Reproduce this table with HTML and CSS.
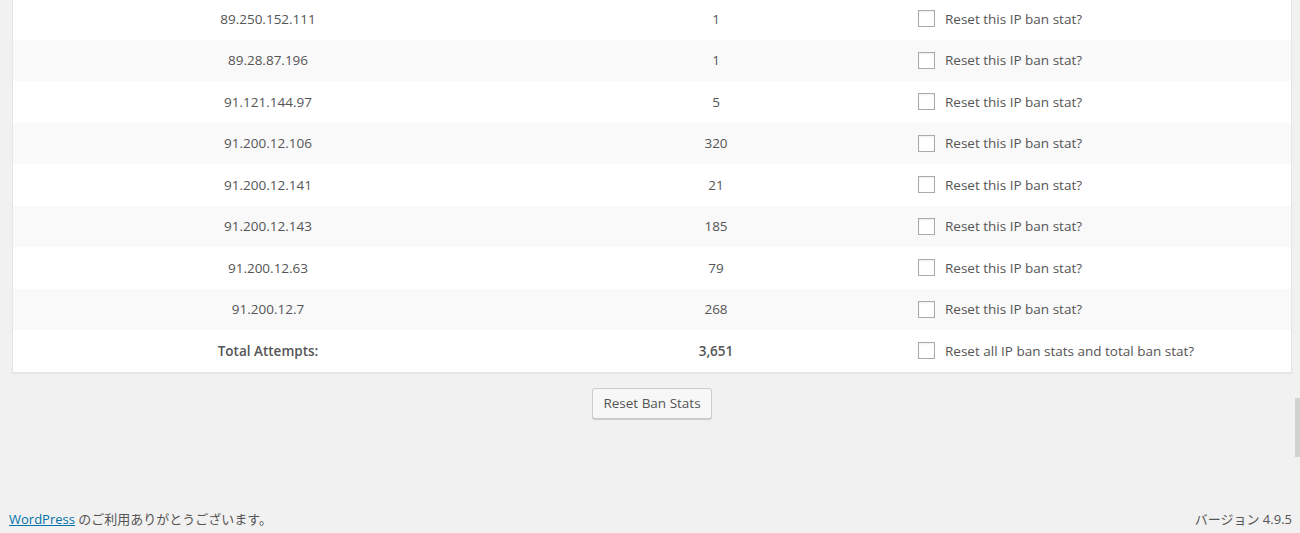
FILE: index.html
```html
<!DOCTYPE html>
<html lang="ja">
<head>
<meta charset="utf-8">
<title>Ban Stats</title>
<link rel="stylesheet" href="styles.css">
</head>
<body>
<div class="wrap">
  <div class="card">
    <div class="row"><div class="c ip">89.250.152.111</div><div class="c num">1</div><label class="c chk"><span class="box"></span>Reset this IP ban stat?</label></div>
    <div class="row alt"><div class="c ip">89.28.87.196</div><div class="c num">1</div><label class="c chk"><span class="box"></span>Reset this IP ban stat?</label></div>
    <div class="row"><div class="c ip">91.121.144.97</div><div class="c num">5</div><label class="c chk"><span class="box"></span>Reset this IP ban stat?</label></div>
    <div class="row alt"><div class="c ip">91.200.12.106</div><div class="c num">320</div><label class="c chk"><span class="box"></span>Reset this IP ban stat?</label></div>
    <div class="row"><div class="c ip">91.200.12.141</div><div class="c num">21</div><label class="c chk"><span class="box"></span>Reset this IP ban stat?</label></div>
    <div class="row alt"><div class="c ip">91.200.12.143</div><div class="c num">185</div><label class="c chk"><span class="box"></span>Reset this IP ban stat?</label></div>
    <div class="row"><div class="c ip">91.200.12.63</div><div class="c num">79</div><label class="c chk"><span class="box"></span>Reset this IP ban stat?</label></div>
    <div class="row alt"><div class="c ip">91.200.12.7</div><div class="c num">268</div><label class="c chk"><span class="box"></span>Reset this IP ban stat?</label></div>
    <div class="row total"><div class="c ip">Total Attempts:</div><div class="c num">3,651</div><label class="c chk"><span class="box"></span>Reset all IP ban stats and total ban stat?</label></div>
  </div>
  <div class="actions"><button class="button" type="button">Reset Ban Stats</button></div>
</div>
<footer class="footer">
  <p class="thanks"><a href="#">WordPress</a> のご利用ありがとうございます。</p>
  <p class="version">バージョン 4.9.5</p>
</footer>
<div class="scrollthumb"></div>
</body>
</html>
```
FILE: styles.css
```css
html, body {
  margin: 0;
  padding: 0;
  height: 533px;
  overflow: hidden;
}
body {
  background: #f1f1f1;
  color: #555;
  font-family: "Open Sans", "Noto Sans CJK JP", sans-serif;
  font-size: 13px;
  position: relative;
}
.wrap {
  padding: 0 8px 0 12px;
}
.card {
  margin-top: -3px;
  background: #fff;
  border: 1px solid #e5e5e5;
  box-shadow: 0 1px 1px rgba(0,0,0,.04);
  font-size: 13.5px;
}
.row {
  display: grid;
  grid-template-columns: 510px 386px 1fr;
  height: 41.5px;
  align-items: center;
}
.row.alt {
  background: #f9f9f9;
}
.c.ip, .c.num {
  text-align: center;
}
.c.chk {
  display: flex;
  align-items: center;
  padding-left: 9px;
}
.box {
  width: 17px;
  height: 17px;
  box-sizing: border-box;
  border: 1px solid #a7abaf;
  background: #fff;
  box-shadow: inset 0 1px 2px rgba(0,0,0,.07);
  margin-right: 10px;
  flex: none;
}
.total .ip, .total .num {
  font-weight: 600;
}
.actions {
  display: flex;
  justify-content: center;
  margin-top: 15px;
}
.button {
  height: 31px;
  padding: 0 10px 1px;
  font-family: inherit;
  font-size: 13.5px;
  color: #555;
  background: #f7f7f7;
  border: 1px solid #ccc;
  border-radius: 3px;
  box-shadow: 0 1px 0 #ccc;
}
.footer {
  position: absolute;
  left: 0;
  right: 0;
  bottom: 0;
  display: flex;
  justify-content: space-between;
  padding: 0 8px 4px 9px;
}
.footer p {
  margin: 0;
  line-height: 20px;
}
.footer a {
  color: #0073aa;
}
.scrollthumb {
  position: absolute;
  right: 0;
  top: 398px;
  width: 5px;
  height: 59px;
  background: #d2d2d2;
}
```
